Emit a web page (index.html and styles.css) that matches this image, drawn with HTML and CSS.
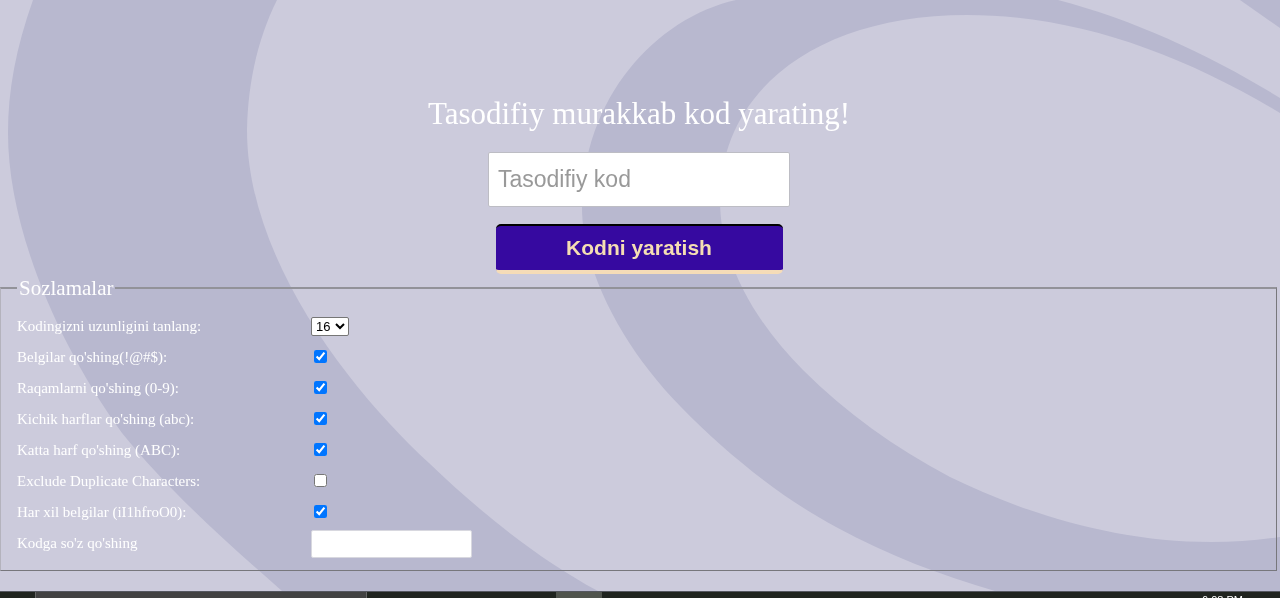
FILE: index.html
```html
<!DOCTYPE html>
<html lang="uz">
<head>
<meta charset="utf-8">
<meta name="viewport" content="width=device-width, initial-scale=1">
<title>Tasodifiy kod</title>
<link rel="stylesheet" href="styles.css">
</head>
<body class="page">
<svg class="backdrop" viewBox="0 0 1280 598" preserveAspectRatio="xMidYMin slice" aria-hidden="true">
  <path class="swirl" d="M33 0 C16 48 8 90 8 133 C8 225 55 340 122 433 C168 490 224 540 282 591 L290 598 L610 598 L598 591 C537 558 480 512 429 463 C355 395 247 262 247 130 C248 82 258 38 277 0 Z"/>
  <path class="swirl" d="M736 0 C656 18 582 98 582 207 C582 270 622 347 681 407 C726 453 780 497 836 527 C890 556 940 575 995 591 L1012 598 L1280 598 L1280 537 C1258 540 1235 542 1211 542 C1120 542 1030 516 950 477 C895 448 846 413 803 370 C755 322 720 262 720 200 C720 88 820 15 967 15 C1075 15 1180 53 1280 113 L1280 98 C1212 56 1135 20 1058 0 Z"/>
  <path class="swirl" d="M1240 0 L1280 28 L1280 0 Z"/>
</svg>
<main class="main">
  <form class="generator">
    <h1 class="title">Tasodifiy murakkab kod yarating!</h1>
    <input class="result" type="text" placeholder="Tasodifiy kod" aria-label="Tasodifiy kod">
    <button class="generate" type="button">Kodni yaratish</button>
    <fieldset class="settings">
      <legend class="legend">Sozlamalar</legend>
      <div class="row"><label for="length">Kodingizni uzunligini tanlang:</label><select class="length" id="length"><option>8</option><option selected>16</option><option>32</option></select></div>
      <div class="row"><label for="symbols">Belgilar qo'shing(!@#$):</label><input class="check" id="symbols" type="checkbox" checked></div>
      <div class="row"><label for="numbers">Raqamlarni qo'shing (0-9):</label><input class="check" id="numbers" type="checkbox" checked></div>
      <div class="row"><label for="lower">Kichik harflar qo'shing (abc):</label><input class="check" id="lower" type="checkbox" checked></div>
      <div class="row"><label for="upper">Katta harf qo'shing (ABC):</label><input class="check" id="upper" type="checkbox" checked></div>
      <div class="row"><label for="duplicates">Exclude Duplicate Characters:</label><input class="check" id="duplicates" type="checkbox"></div>
      <div class="row"><label for="similar">Har xil belgilar (iI1hfroO0):</label><input class="check" id="similar" type="checkbox" checked></div>
      <div class="row"><label for="word">Kodga so'z qo'shing</label><input class="word" id="word" type="text"></div>
    </fieldset>
  </form>
</main>
<footer class="taskbar"><span class="search"></span><span class="task"></span><span class="clock">6:08 PM</span></footer>
</body>
</html>
```
FILE: styles.css
```css
* {
  box-sizing: border-box;
}

.page {
  display: flex;
  flex-direction: column;
  min-height: 100vh;
  margin: 0;
  background: #cccbdc;
  color: #fff;
  font-family: "Liberation Serif", "Times New Roman", serif;
}

.backdrop {
  position: fixed;
  inset: 0;
  z-index: -1;
  width: 100%;
  height: 100%;
}

.swirl {
  fill: #b8b8cf;
}

.main {
  flex: 1;
}

.generator {
  display: flex;
  flex-direction: column;
  align-items: center;
  padding: 97px 2px 0 0;
}

.title {
  margin: 0 0 21px;
  font-size: 31px;
  line-height: 34px;
  font-weight: 400;
}

.result {
  width: 302px;
  height: 55px;
  margin-bottom: 17px;
  padding: 0 9px;
  border: 1px solid #bdbdc4;
  border-radius: 2px;
  background: #fff;
  color: #333;
  font: 23px "Liberation Sans", Arial, sans-serif;
}

.result::placeholder {
  color: #999;
}

.generate {
  width: 287px;
  height: 50px;
  padding: 0;
  border: 0 solid #f5deb3;
  border-top: 2px solid #000;
  border-bottom: 4px solid #f5dcb8;
  border-radius: 5px;
  background: #3609a0;
  color: #f5deb3;
  font: bold 21px "Liberation Sans", Arial, sans-serif;
}

.settings {
  align-self: stretch;
  min-width: 0;
  margin: 2px 1px 0 0;
  padding: 11px 16px;
  border: 1px solid #77777c;
  border-top: 2px solid #929299;
  border-left-color: #b4b3bd;
}

.legend {
  padding: 0 2px;
  font-size: 21px;
  line-height: 24px;
}

.row {
  display: grid;
  grid-template-columns: 294px 1fr;
  align-items: center;
  justify-items: start;
  height: 31px;
  font-size: 15px;
}

.length {
  width: 38px;
  height: 19px;
  padding: 0;
  border: 1px solid #767676;
  border-radius: 2px;
  background: #fff;
  color: #000;
  font: 13px "Liberation Sans", Arial, sans-serif;
}

.check {
  width: 13px;
  height: 13px;
  margin: 0 3px 3px;
}

.word {
  width: 161px;
  height: 28px;
  padding: 0 6px;
  border: 1px solid #d8d8df;
  border-radius: 2px;
  background: #fff;
  font: 13px "Liberation Sans", Arial, sans-serif;
}

.taskbar {
  display: flex;
  height: 7px;
  overflow: hidden;
  border-top: 1px solid #555760;
  background: #20241f;
}

.search {
  width: 332px;
  margin: 0 189px 0 35px;
  border: 1px solid #666;
  border-width: 0 1px;
  background: #424242;
}

.task {
  width: 46px;
  background: #50544d;
}

.clock {
  margin: 2px 37px 0 auto;
  color: #fff;
  font: 11px/12px "Liberation Sans", Arial, sans-serif;
}
```
